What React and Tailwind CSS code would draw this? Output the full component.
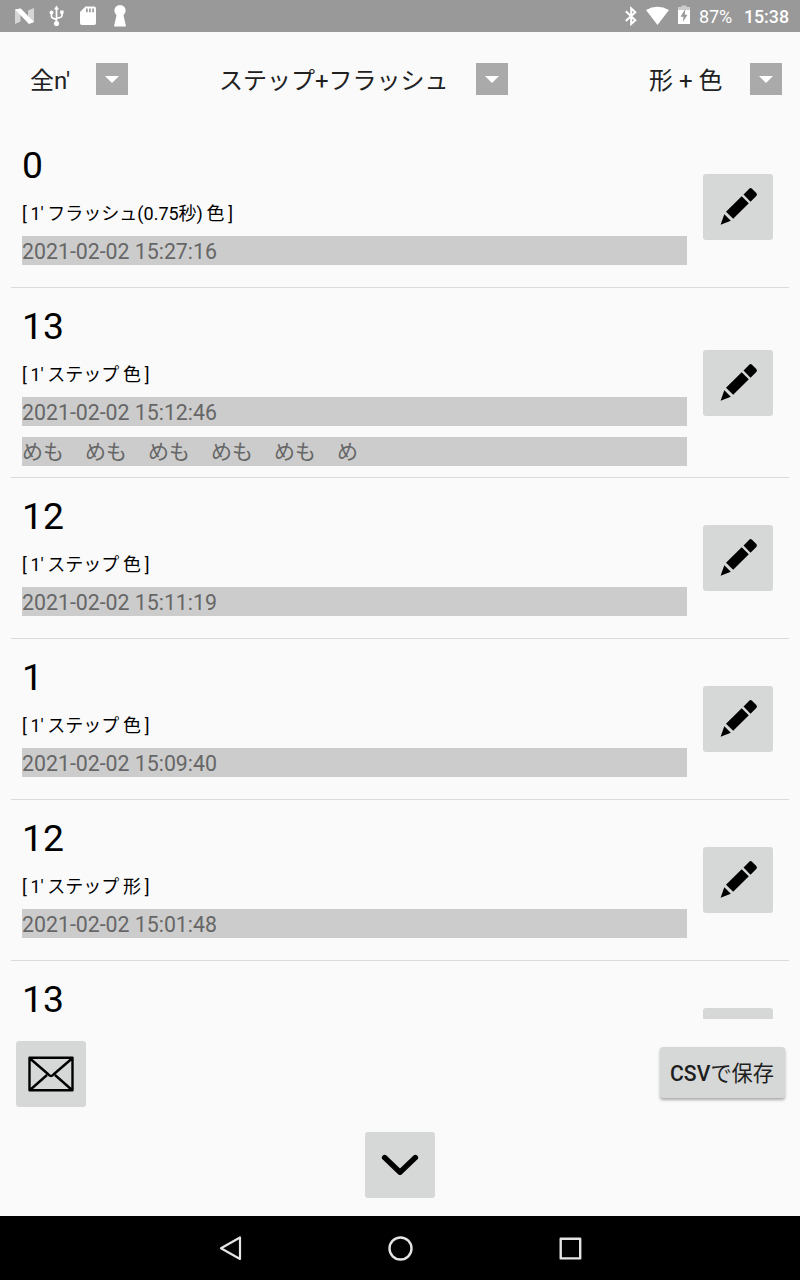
const records = [
  { score: '0', label: "[ 1' フラッシュ(0.75秒) 色 ]", date: '2021-02-02 15:27:16' },
  { score: '13', label: "[ 1' ステップ 色 ]", date: '2021-02-02 15:12:46', memo: 'めも　めも　めも　めも　めも　め' },
  { score: '12', label: "[ 1' ステップ 色 ]", date: '2021-02-02 15:11:19' },
  { score: '1', label: "[ 1' ステップ 色 ]", date: '2021-02-02 15:09:40' },
  { score: '12', label: "[ 1' ステップ 形 ]", date: '2021-02-02 15:01:48' },
  { score: '13' },
];

function StatusBar() {
  return (
    <header className="flex h-8 shrink-0 items-center bg-[#999999] text-white">
      <svg className="ml-[14px] h-8 w-5" viewBox="0 0 20 32" fill="#fff">
        <path d="M1 9.5 L6.5 8.5 V21.5 L1 24Z M14 10.5 L20 8 V22 L14 23.5Z" opacity=".6" />
        <path d="M1 9.5 L6.8 8.6 L20 22 L15 24 Z" />
      </svg>
      <svg className="ml-[15px] h-8 w-4" viewBox="0 0 16 32" fill="none" stroke="#fff" strokeWidth="1.7">
        <path d="M7.5 8 V24 M2.5 13 V16.5 Q2.5 18 4.5 18.3 L7.5 20 M13 12 V15.5 Q13 17 11 17.5 L7.5 18.5" />
        <path d="M7.5 5.5 L10 9.5 H5Z M11.2 10.5 h3.4 v3.2 h-3.4Z" fill="#fff" stroke="none" />
        <circle cx="2.5" cy="12.5" r="2" fill="#fff" stroke="none" />
        <circle cx="7.5" cy="23.5" r="2.6" fill="#fff" stroke="none" />
      </svg>
      <svg className="ml-[15px] h-8 w-4" viewBox="0 0 16 32">
        <path d="M5.5 6.5 H14 Q16 6.5 16 8.5 V23 Q16 25 14 25 H2 Q0 25 0 23 V12Z" fill="#fff" />
        <path d="M6 8.5 h1.7 v3.7 H6Z M9.1 8.5 h1.7 v3.7 H9.1Z M12.2 8.5 h1.7 v3.7 h-1.7Z" fill="#999" />
      </svg>
      <svg className="ml-[18px] h-8 w-3" viewBox="0 0 12 32" fill="#fff">
        <circle cx="6" cy="10.5" r="5.6" />
        <path d="M3 13 H9 L12 26.5 H0Z" />
      </svg>
      <svg className="ml-auto h-8 w-3" viewBox="0 0 12 32" fill="none" stroke="#fff" strokeWidth="2">
        <path d="M.8 11.2 L10.3 20.2 L6.2 24 V8.3 L10.3 12.3 L.8 21.1" />
      </svg>
      <svg className="ml-[9px] h-8 w-[23px]" viewBox="0 0 23 32" fill="#fff">
        <path d="M0 10 Q11.5 3.5 23 10 L11.5 25Z" />
      </svg>
      <svg className="ml-[9px] h-8 w-3" viewBox="0 0 12 32">
        <path d="M3.5 5.5 H8.5 V7 H12 V12 H0 V7 H3.5Z" fill="#fff" opacity=".5" />
        <path d="M0 10 H12 V24 H0Z" fill="#fff" />
        <path d="M7.3 9 L2.5 16.8 H5.5 L4.8 22 L9.5 14.8 H6.8Z" fill="#999" />
      </svg>
      <span className="ml-[9px] w-[34px] whitespace-nowrap pt-[2px] text-[18px] leading-none">87%</span>
      <span className="ml-[11px] mr-[11px] whitespace-nowrap pt-[2px] text-[17.8px] font-medium leading-none">15:38</span>
    </header>
  );
}

function Filter({ children, className = '', labelClass }) {
  return (
    <button className={`flex h-8 items-center text-[24px] leading-none text-[#212121] ${className}`}>
      <span className={`whitespace-nowrap pt-[3px] text-left ${labelClass}`}>{children}</span>
      <span className="flex size-8 items-center justify-center bg-[#aaaaaa]">
        <svg className="mt-px h-[7px] w-[14px]" viewBox="0 0 14 7" fill="#fff">
          <path d="M0 0H14L7 7Z" />
        </svg>
      </span>
    </button>
  );
}

function Pencil() {
  return (
    <svg className="h-[66px] w-[70px]" viewBox="0 0 70 66">
      <path d="M40.5 20.5 L46 15 Q47.5 13.3 49 14.8 L53.3 19 Q54.7 20.5 53.3 22 L47.5 27.7Z M38.7 22.2 L45.8 29.3 L30.2 44.8 L23 37.8Z M21.3 40.3 L27.8 46.8 L17.6 50.8Z" />
    </svg>
  );
}

function RecordRow({ record }) {
  return (
    <li className="flex shrink-0 items-center justify-between border-b border-[#dadada] pl-[11px] pr-4">
      <div className={`w-[665px] ${record.memo ? 'h-[189px]' : 'h-[160px]'}`}>
        <p className="mt-[18px] h-10 text-[37.3px] leading-10 text-black">{record.score}</p>
        {record.label && (
          <p className="mt-[17px] h-6 whitespace-nowrap text-[18px] leading-6 text-black [word-spacing:-0.8px]">{record.label}</p>
        )}
        {record.date && (
          <p className="mt-[10px] h-[29px] bg-[#cccccc] text-[21.3px] leading-[31px] text-[#666666]">{record.date}</p>
        )}
        {record.memo && (
          <p className="mt-[11px] h-[29px] bg-[#cccccc] text-[21px] leading-[31px] text-[#666666]">{record.memo}</p>
        )}
      </div>
      <button className="h-[66px] w-[70px] rounded-[3px] bg-[#d6d8d7]" aria-label="編集">
        <Pencil />
      </button>
    </li>
  );
}

export default function App() {
  return (
    <div className="flex h-[1280px] w-[800px] flex-col overflow-hidden bg-[#fafafa] font-['Roboto','Noto_Sans_CJK_JP',sans-serif]">
      <StatusBar />
      <nav className="mb-px flex h-[94px] shrink-0 items-center pl-[30px] pr-[18px]">
        <Filter labelClass="w-[66px]">全n'</Filter>
        <Filter className="ml-[91px]" labelClass="w-[257px]">ステップ+フラッシュ</Filter>
        <Filter className="ml-auto" labelClass="w-[101px]">形 + 色</Filter>
      </nav>
      <ul className="mx-[11px] flex h-[892px] shrink-0 flex-col overflow-hidden">
        {records.map((record, i) => (
          <RecordRow key={i} record={record} />
        ))}
      </ul>
      <div className="mt-[22px] flex h-[66px] shrink-0 items-start justify-between px-4">
        <button className="h-[66px] w-[70px] rounded-[3px] bg-[#d6d8d7]" aria-label="メール">
          <svg className="h-[66px] w-[70px]" viewBox="0 0 70 66" fill="none" stroke="#000" strokeWidth="2.4" strokeLinejoin="round">
            <path d="M13.5 16.8 H56.5 V49.3 H13.5Z M14 17.5 L32 33 Q35 37 38 33 L56 17.5 M14 49 L31 34 M56 49 L39 34" />
          </svg>
        </button>
        <button className="-mr-px mt-[6px] h-[51px] w-[125px] whitespace-nowrap rounded-[3px] bg-[#d6d8d7] pr-px pt-[2px] text-[21.2px] font-medium leading-none text-[#1f1f1f] shadow-[0_2px_3px_rgba(0,0,0,0.32)]">
          CSV<span className="font-normal">で保存</span>
        </button>
      </div>
      <button className="mx-auto mt-[25px] h-[66px] w-[70px] shrink-0 rounded-[3px] bg-[#d6d8d7]" aria-label="下へ">
        <svg className="h-[66px] w-[70px]" viewBox="0 0 70 66" fill="none" stroke="#000" strokeWidth="5.4" strokeLinecap="round" strokeLinejoin="round">
          <path d="M19.6 25.5 L35 40.2 L50.4 25.5" />
        </svg>
      </button>
      <footer className="mt-auto flex h-16 shrink-0 items-center bg-black">
        <svg className="ml-[218px] size-[26px]" viewBox="0 0 26 26" fill="none" stroke="#e4e4e4" strokeWidth="2.2" strokeLinejoin="round">
          <path d="M22 2.5 V24 L3 13.3Z" />
        </svg>
        <svg className="ml-[143px] size-[26px]" viewBox="0 0 26 26" fill="none" stroke="#e4e4e4" strokeWidth="2.4">
          <circle cx="13.5" cy="13.5" r="11" />
        </svg>
        <svg className="ml-[144px] size-[26px]" viewBox="0 0 26 26" fill="none" stroke="#e4e4e4" strokeWidth="2.4" strokeLinejoin="round">
          <path d="M3.7 3.7 H23.2 V23.4 H3.7Z" />
        </svg>
      </footer>
    </div>
  );
}
